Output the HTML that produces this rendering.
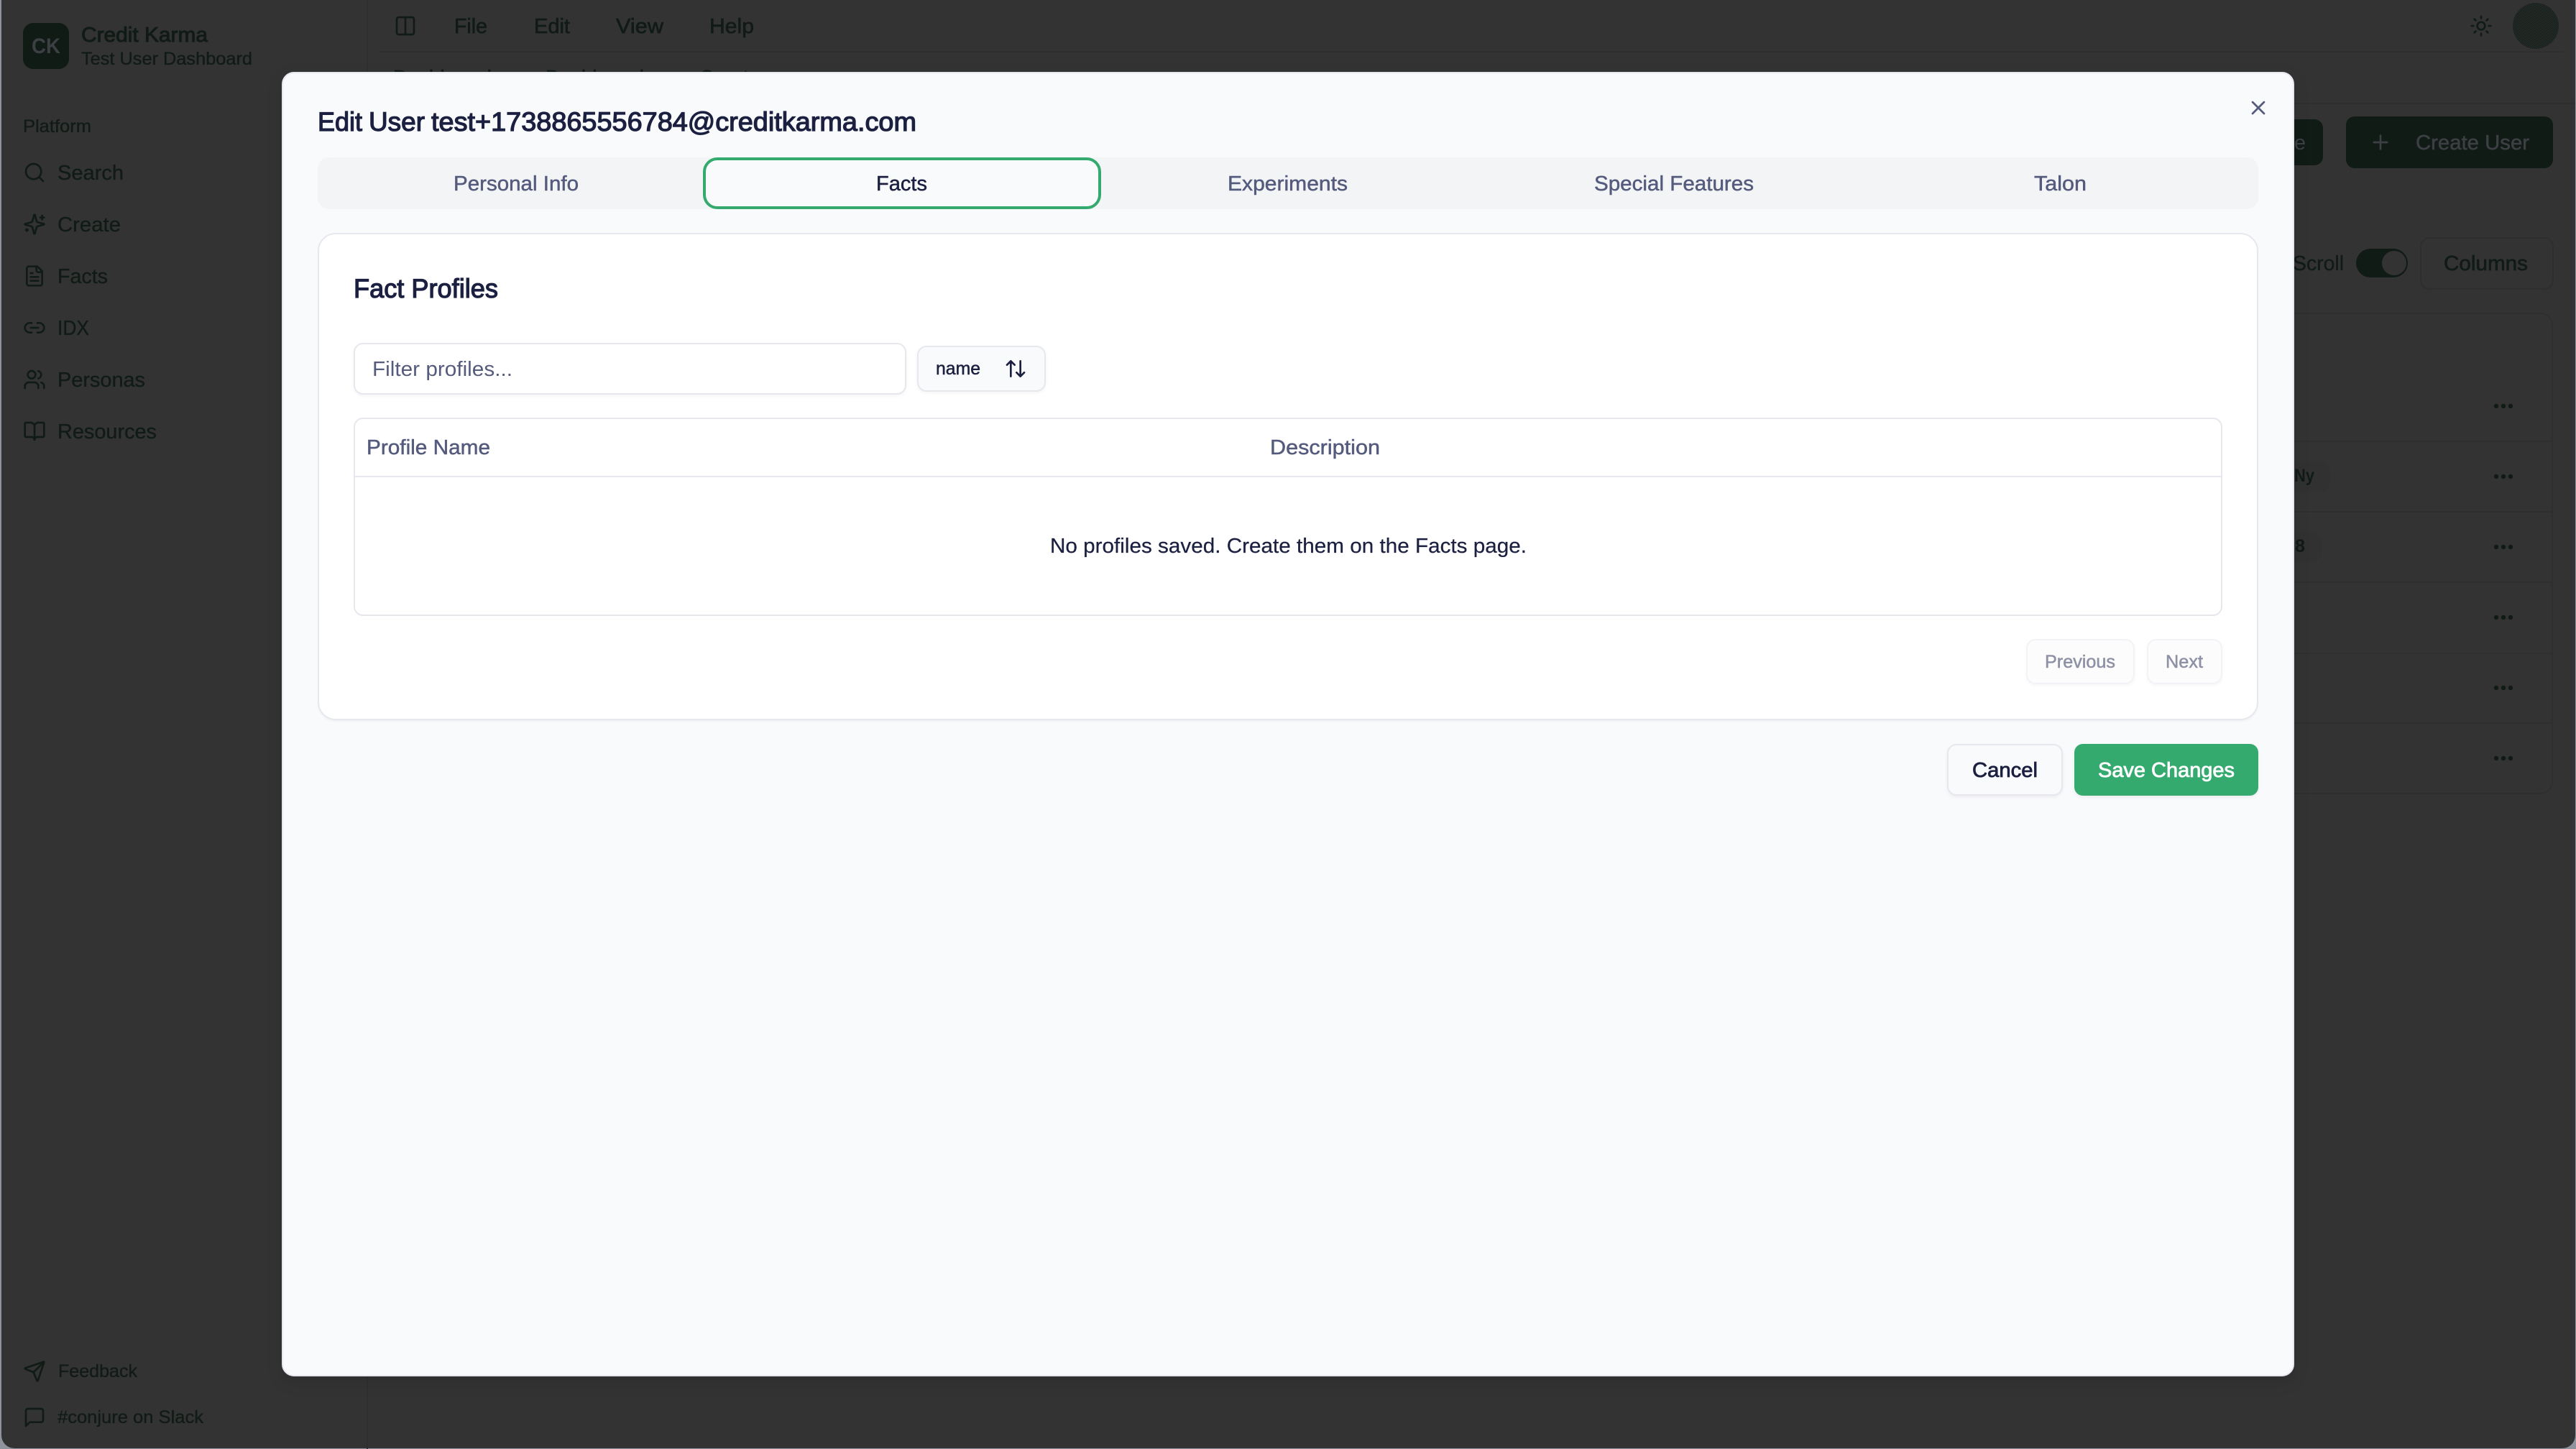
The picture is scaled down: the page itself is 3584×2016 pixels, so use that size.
<!DOCTYPE html>
<html><head><meta charset="utf-8"><title>Edit User</title>
<style>
html,body{margin:0;padding:0;width:3584px;height:2016px;overflow:hidden;background:#333}
svg{display:block;position:absolute;left:0;top:0}
text{font-family:"Liberation Sans",Arial,sans-serif;white-space:pre}
.d{fill:#111b16;stroke:#111b16;stroke-width:.35}
.dm{fill:#111b16;stroke:#111b16;stroke-width:.7}
.ds{fill:#111b16;stroke:#111b16;stroke-width:1}
.m{stroke-width:.5;stroke:currentColor}
.s{stroke-width:1.25}
.i{fill:none;stroke:#111b16;stroke-width:2;stroke-linecap:round;stroke-linejoin:round}
.n{fill:none;stroke:#565a7c;stroke-width:2;stroke-linecap:round;stroke-linejoin:round}
.k{fill:none;stroke:#1c2040;stroke-width:2;stroke-linecap:round;stroke-linejoin:round}
</style></head>
<body>
<svg width="3584" height="2016" viewBox="0 0 3584 2016" xmlns="http://www.w3.org/2000/svg">
<defs><pattern id="dz" width="2" height="2" patternUnits="userSpaceOnUse"><rect width="2" height="2" fill="#2c302e"/><rect width="1" height="1" fill="#111b16"/><rect x="1" y="1" width="1" height="1" fill="#111b16"/></pattern></defs>
<rect width="3584" height="2016" fill="#8f949c"/>
<rect x="2" y="-20" width="3581" height="2035" rx="18" fill="#333"/>

<!-- sidebar -->
<line x1="511" y1="0" x2="511" y2="2016" stroke="#2f2f2f" stroke-width="2"/>
<rect x="32" y="32" width="64" height="64" rx="14" fill="#111b16"/>
<text x="44" y="74" font-size="30" font-weight="700" fill="#3c3f44" textLength="40" lengthAdjust="spacingAndGlyphs">CK</text>
<text x="113" y="58" font-size="29" class="ds" textLength="176" lengthAdjust="spacingAndGlyphs">Credit Karma</text>
<text x="113" y="90" font-size="25" class="d" textLength="238" lengthAdjust="spacingAndGlyphs">Test User Dashboard</text>
<text x="32" y="184" font-size="25" class="d" textLength="95" lengthAdjust="spacingAndGlyphs">Platform</text>
<text x="80" y="250" font-size="29" class="d" textLength="92" lengthAdjust="spacingAndGlyphs">Search</text>
<text x="80" y="322" font-size="29" class="d" textLength="88" lengthAdjust="spacingAndGlyphs">Create</text>
<text x="80" y="394" font-size="29" class="d" textLength="70" lengthAdjust="spacingAndGlyphs">Facts</text>
<text x="80" y="466" font-size="29" class="d" textLength="44" lengthAdjust="spacingAndGlyphs">IDX</text>
<text x="80" y="538" font-size="29" class="d" textLength="122" lengthAdjust="spacingAndGlyphs">Personas</text>
<text x="80" y="610" font-size="29" class="d" textLength="138" lengthAdjust="spacingAndGlyphs">Resources</text>
<text x="81" y="1916" font-size="25" class="d" textLength="110" lengthAdjust="spacingAndGlyphs">Feedback</text>
<text x="80" y="1980" font-size="25" class="d" textLength="203" lengthAdjust="spacingAndGlyphs">#conjure on Slack</text>

<g class="i" transform="translate(32,224) scale(1.3333)"><circle cx="11" cy="11" r="8"/><path d="m21 21-4.3-4.3"/></g>
<g class="i" transform="translate(32,296) scale(1.3333)"><path d="M9.937 15.5A2 2 0 0 0 8.5 14.063l-6.135-1.582a.5.5 0 0 1 0-.962L8.5 9.936A2 2 0 0 0 9.937 8.5l1.582-6.135a.5.5 0 0 1 .963 0L14.063 8.5A2 2 0 0 0 15.5 9.937l6.135 1.581a.5.5 0 0 1 0 .964L15.5 14.063a2 2 0 0 0-1.437 1.437l-1.582 6.135a.5.5 0 0 1-.963 0z"/><path d="M20 3v4M22 5h-4M4 17v2M5 18H3"/></g>
<g class="i" transform="translate(32,368) scale(1.3333)"><path d="M15 2H6a2 2 0 0 0-2 2v16a2 2 0 0 0 2 2h12a2 2 0 0 0 2-2V7Z"/><path d="M14 2v4a2 2 0 0 0 2 2h4"/><path d="M10 9H8M16 13H8M16 17H8"/></g>
<g class="i" transform="translate(32,440) scale(1.3333)"><path d="M9 17H7A5 5 0 0 1 7 7h2"/><path d="M15 7h2a5 5 0 1 1 0 10h-2"/><path d="M8 12h8"/></g>
<g class="i" transform="translate(32,512) scale(1.3333)"><path d="M16 21v-2a4 4 0 0 0-4-4H6a4 4 0 0 0-4 4v2"/><circle cx="9" cy="7" r="4"/><path d="M22 21v-2a4 4 0 0 0-3-3.87"/><path d="M16 3.13a4 4 0 0 1 0 7.75"/></g>
<g class="i" transform="translate(32,584) scale(1.3333)"><path d="M12 7v14"/><path d="M3 18a1 1 0 0 1-1-1V4a1 1 0 0 1 1-1h5a4 4 0 0 1 4 4 4 4 0 0 1 4-4h5a1 1 0 0 1 1 1v13a1 1 0 0 1-1 1h-6a3 3 0 0 0-3 3 3 3 0 0 0-3-3z"/></g>
<g class="i" transform="translate(32,1892) scale(1.3333)"><path d="M14.536 21.686a.5.5 0 0 0 .937-.024l6.5-19a.496.496 0 0 0-.635-.635l-19 6.5a.5.5 0 0 0-.024.937l7.93 3.18a2 2 0 0 1 1.112 1.11z"/><path d="m21.854 2.147-10.94 10.939"/></g>
<g class="i" transform="translate(32,1956) scale(1.3333)"><path d="M21 15a2 2 0 0 1-2 2H7l-4 4V5a2 2 0 0 1 2-2h14a2 2 0 0 1 2 2z"/></g>

<!-- top bar -->
<g class="i" transform="translate(548,20) scale(1.3333)"><rect x="3" y="3" width="18" height="18" rx="2"/><path d="M12 3v18"/></g>
<text x="632" y="46" font-size="29" class="dm" textLength="46" lengthAdjust="spacingAndGlyphs">File</text>
<text x="743" y="46" font-size="29" class="dm" textLength="50" lengthAdjust="spacingAndGlyphs">Edit</text>
<text x="857" y="46" font-size="29" class="dm" textLength="66" lengthAdjust="spacingAndGlyphs">View</text>
<text x="987" y="46" font-size="29" class="dm" textLength="62" lengthAdjust="spacingAndGlyphs">Help</text>
<line x1="528" y1="72" x2="3566" y2="72" stroke="#2f2f2f" stroke-width="2"/>
<text x="547" y="117" font-size="28" class="dm">Dashboard</text>
<text x="759" y="117" font-size="28" class="dm">Dashboard</text>
<text x="973" y="117" font-size="28" class="dm">Create</text>
<line x1="512" y1="144" x2="3582" y2="144" stroke="#2f2f2f" stroke-width="2"/>
<g class="i" transform="translate(3436,20) scale(1.3333)"><circle cx="12" cy="12" r="4"/><path d="M12 2v2M12 20v2m-7.07-17.07 1.41 1.41m11.32 11.32 1.41 1.41M2 12h2M20 12h2M6.34 17.66l-1.41 1.41M19.07 4.93l-1.41 1.41"/></g>
<circle cx="3528" cy="36" r="32" fill="url(#dz)"/>

<!-- right background content -->
<rect x="3100" y="166" width="132" height="64" rx="12" fill="#111b16"/>
<text x="3192" y="208" font-size="29" fill="#3c3f44" textLength="16" lengthAdjust="spacingAndGlyphs">e</text>
<rect x="3264" y="162" width="288" height="72" rx="12" fill="#111b16"/>
<g fill="none" stroke="#3c3f44" stroke-width="2" stroke-linecap="round" transform="translate(3296,182) scale(1.3333)"><path d="M5 12h14M12 5v14"/></g>
<text x="3361" y="208" font-size="29" fill="#3c3f44" color="#3c3f44" class="m" textLength="158" lengthAdjust="spacingAndGlyphs">Create User</text>
<text x="3190" y="376" font-size="29" class="d" textLength="71" lengthAdjust="spacingAndGlyphs">Scroll</text>
<rect x="3278" y="346" width="72" height="40" rx="20" fill="#111b16"/>
<circle cx="3331" cy="366" r="17" fill="#333"/>
<rect x="3368" y="331" width="184" height="71" rx="12" fill="none" stroke="#2e2e2e" stroke-width="2"/>
<text x="3400" y="376" font-size="29" class="dm" textLength="117" lengthAdjust="spacingAndGlyphs">Columns</text>
<rect x="3100" y="436" width="451" height="668" rx="16" fill="none" stroke="#2f2f2f" stroke-width="2"/>
<g stroke="#2f2f2f" stroke-width="2"><line x1="3100" y1="614" x2="3551" y2="614"/><line x1="3100" y1="712" x2="3551" y2="712"/><line x1="3100" y1="810" x2="3551" y2="810"/><line x1="3100" y1="909" x2="3551" y2="909"/><line x1="3100" y1="1006" x2="3551" y2="1006"/></g>
<rect x="3100" y="641" width="142" height="44" rx="16" fill="#313131"/>
<rect x="3100" y="739" width="130" height="44" rx="16" fill="#313131"/>
<text x="3192" y="670" font-size="25" font-weight="700" fill="#111b16" textLength="28" lengthAdjust="spacingAndGlyphs">Ny</text>
<text x="3193" y="768" font-size="25" font-weight="700" fill="#111b16" textLength="14" lengthAdjust="spacingAndGlyphs">8</text>
<g fill="#111b16">
<circle cx="3473" cy="565" r="3.2"/><circle cx="3483" cy="565" r="3.2"/><circle cx="3493" cy="565" r="3.2"/>
<circle cx="3473" cy="663" r="3.2"/><circle cx="3483" cy="663" r="3.2"/><circle cx="3493" cy="663" r="3.2"/>
<circle cx="3473" cy="761" r="3.2"/><circle cx="3483" cy="761" r="3.2"/><circle cx="3493" cy="761" r="3.2"/>
<circle cx="3473" cy="859" r="3.2"/><circle cx="3483" cy="859" r="3.2"/><circle cx="3493" cy="859" r="3.2"/>
<circle cx="3473" cy="957" r="3.2"/><circle cx="3483" cy="957" r="3.2"/><circle cx="3493" cy="957" r="3.2"/>
<circle cx="3473" cy="1055" r="3.2"/><circle cx="3483" cy="1055" r="3.2"/><circle cx="3493" cy="1055" r="3.2"/>
</g>

<!-- modal -->
<rect x="393" y="101" width="2798" height="1813" rx="16" fill="#f9fafc" stroke="#e7e8ee" stroke-width="2" style="filter:drop-shadow(0 8px 10px rgba(0,0,0,.1))"/>
<text x="442" y="182" font-size="37" fill="#1c2040" color="#1c2040" class="m s" textLength="62" lengthAdjust="spacingAndGlyphs">Edit</text>
<text x="513" y="182" font-size="37" fill="#1c2040" color="#1c2040" class="m s" textLength="78" lengthAdjust="spacingAndGlyphs">User</text>
<text x="600" y="182" font-size="37" fill="#1c2040" color="#1c2040" class="m s" textLength="675" lengthAdjust="spacingAndGlyphs">test+1738865556784@creditkarma.com</text>
<g class="n" transform="translate(3126,134) scale(1.3333)"><path d="M18 6 6 18M6 6l12 12"/></g>

<!-- tabs -->
<rect x="442" y="219" width="2700" height="72" rx="16" fill="#f3f4f6"/>
<rect x="980" y="221" width="550" height="68" rx="18" fill="#f9fafc" stroke="#34aa6f" stroke-width="4"/>
<text x="631" y="265" font-size="29" fill="#555b7d" color="#555b7d" class="m" textLength="174" lengthAdjust="spacingAndGlyphs">Personal Info</text>
<text x="1219" y="265" font-size="29" fill="#1c2040" color="#1c2040" class="m" textLength="71" lengthAdjust="spacingAndGlyphs">Facts</text>
<text x="1708" y="265" font-size="29" fill="#555b7d" color="#555b7d" class="m" textLength="167" lengthAdjust="spacingAndGlyphs">Experiments</text>
<text x="2218" y="265" font-size="29" fill="#555b7d" color="#555b7d" class="m" textLength="222" lengthAdjust="spacingAndGlyphs">Special Features</text>
<text x="2830" y="265" font-size="29" fill="#555b7d" color="#555b7d" class="m" textLength="73" lengthAdjust="spacingAndGlyphs">Talon</text>

<!-- card -->
<rect x="443" y="325" width="2698" height="676" rx="24" fill="#fff" stroke="#e7e8ee" stroke-width="2" style="filter:drop-shadow(0 2px 1px rgba(0,0,0,.03))"/>
<text x="492" y="414" font-size="37" fill="#1c2040" color="#1c2040" class="m s" textLength="201" lengthAdjust="spacingAndGlyphs">Fact Profiles</text>

<rect x="493" y="478" width="767" height="70" rx="12" fill="#fff" stroke="#e7e8ee" stroke-width="2" style="filter:drop-shadow(0 2px 2px rgba(0,0,0,.04))"/>
<text x="518" y="523" font-size="29" fill="#555b7d" textLength="195" lengthAdjust="spacingAndGlyphs">Filter profiles...</text>

<rect x="1277" y="482" width="177" height="62" rx="12" fill="#f9fafc" stroke="#e7e8ee" stroke-width="2" style="filter:drop-shadow(0 2px 2px rgba(0,0,0,.04))"/>
<text x="1302" y="521" font-size="25" fill="#1c2040" color="#1c2040" class="m" textLength="62" lengthAdjust="spacingAndGlyphs">name</text>
<g class="k" transform="translate(1397,497) scale(1.3333)"><path d="m21 16-4 4-4-4M17 20V4M3 8l4-4 4 4M7 4v16"/></g>

<rect x="493" y="582" width="2598" height="274" rx="12" fill="#fff" stroke="#e7e8ee" stroke-width="2"/>
<line x1="493" y1="663" x2="3091" y2="663" stroke="#e7e8ee" stroke-width="2"/>
<text x="510" y="632" font-size="29" fill="#555b7d" color="#555b7d" class="m" textLength="172" lengthAdjust="spacingAndGlyphs">Profile Name</text>
<text x="1767" y="632" font-size="29" fill="#555b7d" color="#555b7d" class="m" textLength="153" lengthAdjust="spacingAndGlyphs">Description</text>
<text x="1461" y="769" font-size="29" fill="#1c2040" color="#1c2040" class="m" style="stroke-width:.25" textLength="663" lengthAdjust="spacingAndGlyphs">No profiles saved. Create them on the Facts page.</text>

<rect x="2820" y="890" width="149" height="61" rx="12" fill="#fcfcfd" stroke="#f2f3f6" stroke-width="2" style="filter:drop-shadow(0 2px 2px rgba(0,0,0,.03))"/>
<rect x="2988" y="890" width="103" height="61" rx="12" fill="#fcfcfd" stroke="#f2f3f6" stroke-width="2" style="filter:drop-shadow(0 2px 2px rgba(0,0,0,.03))"/>
<text x="2845" y="929" font-size="25" fill="#8e90a6" color="#8e90a6" class="m" textLength="98" lengthAdjust="spacingAndGlyphs">Previous</text>
<text x="3013" y="929" font-size="25" fill="#8e90a6" color="#8e90a6" class="m" textLength="52" lengthAdjust="spacingAndGlyphs">Next</text>

<rect x="2710" y="1036" width="159" height="70" rx="12" fill="#f9fafc" stroke="#e7e8ee" stroke-width="2" style="filter:drop-shadow(0 2px 2px rgba(0,0,0,.05))"/>
<text x="2744" y="1081" font-size="29" fill="#1c2040" color="#1c2040" class="m" style="stroke-width:.8" textLength="91" lengthAdjust="spacingAndGlyphs">Cancel</text>
<rect x="2886" y="1035" width="256" height="72" rx="12" fill="#34aa6f" style="filter:drop-shadow(0 2px 2px rgba(0,0,0,.06))"/>
<text x="2919" y="1081" font-size="29" fill="#fff" color="#fff" class="m" style="stroke-width:.8" textLength="190" lengthAdjust="spacingAndGlyphs">Save Changes</text>
</svg>
</body></html>
